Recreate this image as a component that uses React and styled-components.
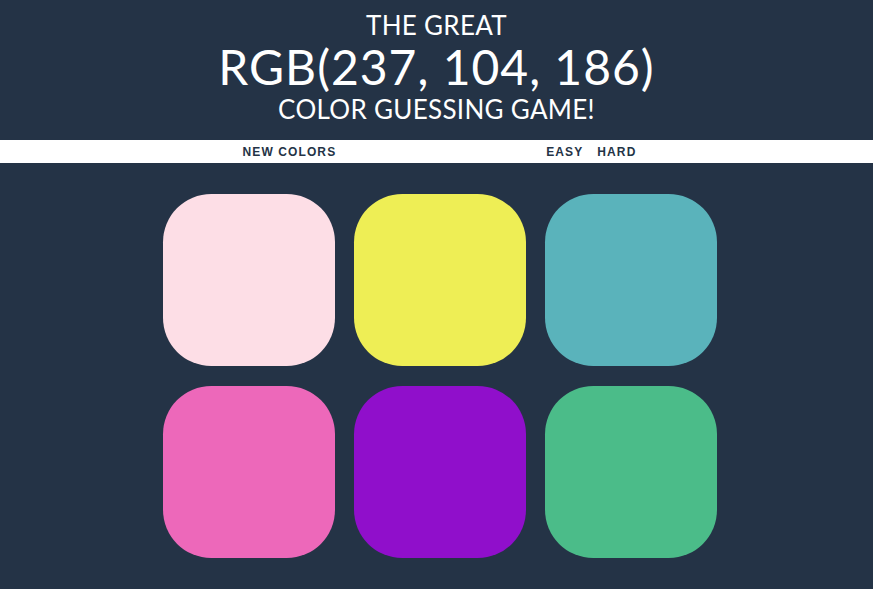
import React from "react";
import styled, { createGlobalStyle } from "styled-components";

const GlobalStyle = createGlobalStyle`
  body {
    margin: 0;
    background: #243346;
    font-family: "Lato", "Open Sans", sans-serif;
  }
`;

const Header = styled.header`
  height: 140px;
  display: flex;
  flex-direction: column;
  align-items: center;
  justify-content: flex-start;
  color: #ffffff;
  text-transform: uppercase;
  padding-top: 12px;
  box-sizing: border-box;
`;

const Line = styled.span`
  display: block;
  font-size: ${({ $big }) => ($big ? "48px" : "26px")};
  line-height: ${({ $big }) => ($big ? "58px" : "26px")};
  letter-spacing: ${({ $big }) => ($big ? "1px" : "0.3px")};
  font-weight: 400;
`;

const Stripe = styled.nav`
  height: 23px;
  background: #ffffff;
  display: flex;
  align-items: center;
  justify-content: center;
  padding-left: 6px;
`;

const NavButton = styled.button`
  border: none;
  background: none;
  padding: 0 7px;
  font-family: "Liberation Sans", Arial, sans-serif;
  font-weight: 700;
  font-size: 12px;
  letter-spacing: 1.1px;
  color: #243346;
  text-transform: uppercase;
`;

const Message = styled.span`
  display: inline-block;
  width: 196px;
`;

const Grid = styled.main`
  display: grid;
  grid-template-columns: repeat(3, 172px);
  gap: 20px 19px;
  justify-content: center;
  padding: 31px 0 0 6px;
`;

const Square = styled.div`
  width: 172px;
  height: 172px;
  border-radius: 28%;
  background: ${({ $color }) => $color};
`;

const colors = [
  "rgb(253, 222, 230)",
  "rgb(238, 238, 85)",
  "rgb(90, 179, 187)",
  "rgb(237, 104, 186)",
  "rgb(144, 15, 203)",
  "rgb(75, 188, 137)",
];

export default function App() {
  return (
    <>
      <GlobalStyle />
      <Header>
        <Line>The Great</Line>
        <Line $big>RGB(237, 104, 186)</Line>
        <Line>Color Guessing Game!</Line>
      </Header>
      <Stripe>
        <NavButton>New Colors</NavButton>
        <Message />
        <NavButton>Easy</NavButton>
        <NavButton>Hard</NavButton>
      </Stripe>
      <Grid>
        {colors.map((c, i) => (
          <Square key={i} $color={c} />
        ))}
      </Grid>
    </>
  );
}
